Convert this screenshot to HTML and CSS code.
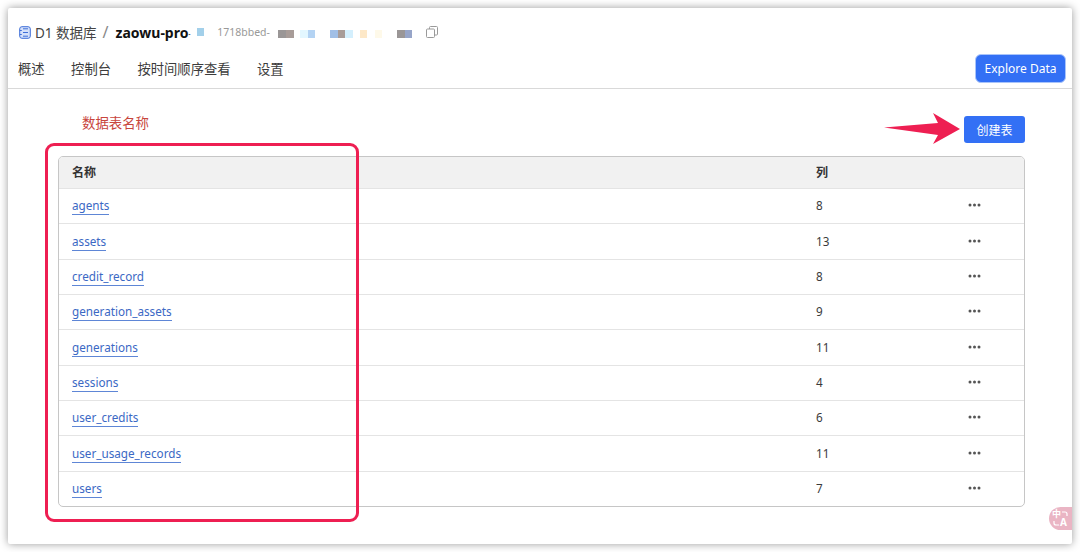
FILE: index.html
```html
<!DOCTYPE html>
<html lang="zh">
<head>
<meta charset="utf-8">
<title>D1 数据库</title>
<link rel="stylesheet" href="styles.css">
</head>
<body>
<svg class="defs" width="0" height="0"><defs><g id="more"><circle cx="2" cy="2" r="1.500"/><circle cx="6.500" cy="2" r="1.500"/><circle cx="11" cy="2" r="1.500"/></g></defs></svg>
<div class="card">
  <header class="header">
    <div class="crumbs">
      <svg class="db-icon" width="12" height="13" viewBox="0 0 12 13" fill="#d5e1fa" stroke="#3f6fd8" stroke-width="1"><rect x=".7" y=".7" width="10.600" height="11.600" rx="2.200"/><path d="M.8 4.500h2M.8 8.500h2M4 2.800h5M4 6.500h5M4 10.200h5" fill="none"/></svg>
      <span class="crumb">D1 数据库</span>
      <span class="slash">/</span>
      <span class="db-name">zaowu-pro<span class="dash">-</span></span>
      <i class="blot b-sky first"></i>
      <span class="db-id">1718bbed-</span>
      <span class="blots blots-a"><i class="blot b-grey"></i><i class="blot b-taupe"></i></span>
      <span class="blots blots-b"><i class="blot b-ice"></i><i class="blot b-blue"></i></span>
      <span class="blots blots-c"><i class="blot b-mid"></i><i class="blot b-taupe"></i><i class="blot b-ice2"></i></span>
      <span class="blots blots-d"><i class="blot b-peach"></i></span>
      <span class="blots blots-e"><i class="blot b-cream"></i></span>
      <span class="blots blots-f"><i class="blot b-grey"></i><i class="blot b-slate"></i></span>
      <svg class="copy" width="12" height="12" viewBox="0 0 12 12" fill="none" stroke="#9a9a9a" stroke-width="1"><rect x=".5" y="3" width="8" height="8.500" rx="1"/><path d="M3.500 3V1.500a1 1 0 0 1 1-1h6a1 1 0 0 1 1 1V8a1 1 0 0 1-1 1H8.500"/></svg>
    </div>
    <div class="tabs-row">
      <nav class="tabs">
        <a class="tab">概述</a>
        <a class="tab">控制台</a>
        <a class="tab">按时间顺序查看</a>
        <a class="tab">设置</a>
      </nav>
      <button class="btn btn-explore">Explore Data</button>
    </div>
  </header>
  <main class="main">
    <div class="toolbar"><button class="btn btn-create">创建表</button></div>
    <div class="table">
      <div class="row head"><span class="c-name">名称</span><span class="c-cols">列</span><span class="c-more"></span></div>
      <div class="row"><span class="c-name"><a class="link">agents</a></span><span class="c-cols">8</span><svg class="c-more" width="13" height="4" viewBox="0 0 13 4"><use href="#more"/></svg></div>
      <div class="row"><span class="c-name"><a class="link">assets</a></span><span class="c-cols">13</span><svg class="c-more" width="13" height="4" viewBox="0 0 13 4"><use href="#more"/></svg></div>
      <div class="row"><span class="c-name"><a class="link">credit_record</a></span><span class="c-cols">8</span><svg class="c-more" width="13" height="4" viewBox="0 0 13 4"><use href="#more"/></svg></div>
      <div class="row"><span class="c-name"><a class="link">generation_assets</a></span><span class="c-cols">9</span><svg class="c-more" width="13" height="4" viewBox="0 0 13 4"><use href="#more"/></svg></div>
      <div class="row"><span class="c-name"><a class="link">generations</a></span><span class="c-cols">11</span><svg class="c-more" width="13" height="4" viewBox="0 0 13 4"><use href="#more"/></svg></div>
      <div class="row"><span class="c-name"><a class="link">sessions</a></span><span class="c-cols">4</span><svg class="c-more" width="13" height="4" viewBox="0 0 13 4"><use href="#more"/></svg></div>
      <div class="row"><span class="c-name"><a class="link">user_credits</a></span><span class="c-cols">6</span><svg class="c-more" width="13" height="4" viewBox="0 0 13 4"><use href="#more"/></svg></div>
      <div class="row"><span class="c-name"><a class="link">user_usage_records</a></span><span class="c-cols">11</span><svg class="c-more" width="13" height="4" viewBox="0 0 13 4"><use href="#more"/></svg></div>
      <div class="row"><span class="c-name"><a class="link">users</a></span><span class="c-cols">7</span><svg class="c-more" width="13" height="4" viewBox="0 0 13 4"><use href="#more"/></svg></div>
    </div>
  </main>
  <div class="note">数据表名称</div>
  <div class="highlight"></div>
  <svg class="arrow" width="82" height="36" viewBox="0 0 82 36"><path d="M0 15.500 54 11 49 1 76 17 49 32 54 23Z" fill="#ee1f52"/></svg>
  <div class="translate">
    <span class="zh">中</span><span class="en">A</span>
    <svg class="corners" width="23" height="23" viewBox="0 0 23 23" fill="none" stroke="#fff" stroke-width="1.200"><path d="M13 5h3a2 2 0 0 1 2 2v2M5 14v2a2 2 0 0 0 2 2h3"/></svg>
  </div>
</div>
</body>
</html>
```

FILE: styles.css
```css
* { box-sizing: border-box; }
html, body { margin: 0; height: 100%; }
body {
  padding: 8px;
  background: #fff;
  overflow: hidden;
  font-family: "Noto Sans", "Noto Sans CJK SC", sans-serif;
  color: #36393a;
}
.defs { position: absolute; }
.card {
  position: relative;
  width: 1064px;
  height: 536px;
  background: #fff;
  box-shadow: 0 0 8px rgba(0,0,0,.4);
  border-radius: 2px;
}
.header {
  height: 81px;
  border-bottom: 1px solid #d9d9d9;
}
.crumbs {
  display: flex;
  align-items: center;
  height: 48px;
  padding: 0 0 0 11px;
  white-space: nowrap;
}
.db-icon { flex: none; }
.crumb { font-size: 13.500px; margin-left: 4px; color: #444; }
.slash { font-size: 16px; color: #888; margin-left: 6px; }
.db-name { font-size: 14px; font-weight: 700; color: #111; margin-left: 7px; width: 73px; }
.dash { font-size: 6px; vertical-align: 2px; }
.db-id { font-size: 10.500px; color: #999; margin-left: 13px; width: 52px; }
.blot { display: block; width: 7.700px; height: 8px; flex: none; filter: blur(.4px); }
.first { margin-left: 8px; }
.blots { display: flex; margin-top: 3px; }
.blots-a { margin-left: 9px; }
.blots-b { margin-left: 6.500px; }
.blots-c { margin-left: 14.500px; }
.blots-d { margin-left: 6.500px; }
.blots-e { margin-left: 7.500px; }
.blots-f { margin-left: 14.500px; }
.b-sky { background: #a3d0ea; }
.b-grey { background: #9a9696; }
.b-taupe { background: #a89c98; }
.b-ice { background: #e3f7ff; }
.b-blue { background: #b4d3f3; }
.b-mid { background: #a1bfe6; }
.b-ice2 { background: #d4effd; }
.b-peach { background: #fde8c8; }
.b-cream { background: #fef9e9; }
.b-slate { background: #97a5c8; }
.copy { margin-left: 14px; margin-top: -1px; flex: none; }
.tabs-row {
  display: flex;
  align-items: flex-start;
  justify-content: space-between;
  padding: 0 6px 0 10px;
  height: 32px;
}
.tabs { display: flex; align-items: center; gap: 26.500px; height: 24px; }
.tab { font-size: 13.300px; color: #3c3c3c; }
.btn {
  border: 0;
  color: #fff;
  background: #3370f5;
  font-family: inherit;
  padding: 0;
}
.btn-explore {
  width: 91px;
  height: 29px;
  margin-top: -2px;
  font-size: 12px;
  border-radius: 6px;
  border: 1px solid #a9c4fa;
}
.main { padding: 27px 47px 0 50px; }
.toolbar { display: flex; justify-content: flex-end; height: 40px; }
.btn-create { width: 61px; height: 27px; font-size: 12px; border-radius: 3px; }
.table {
  border: 1px solid #c6c6c6;
  border-radius: 5px;
  overflow: hidden;
}
.row {
  display: flex;
  align-items: center;
  height: 35.350px;
  padding: 0 0 2px 13px;
  font-size: 11.700px;
  border-top: 1px solid #e4e4e4;
  color: #3a3a3a;
}
.row.head {
  height: 31px;
  padding-bottom: 1px;
  border-top: 0;
  background: #f1f1f1;
  font-size: 12px;
  font-weight: 700;
  color: #333;
}
.c-name { width: 744px; }
.c-cols { width: 152px; }
.c-more { fill: #555; flex: none; }
.link {
  color: #3b68c4;
  border-bottom: 1px solid #5e86d6;
  padding-bottom: 1px;
}
.note {
  position: absolute;
  left: 74px;
  top: 104px;
  font-size: 13.400px;
  color: #c8453c;
}
.highlight {
  position: absolute;
  left: 37px;
  top: 135px;
  width: 314px;
  height: 379px;
  border: 3px solid #ee1f52;
  border-radius: 9px;
}
.arrow { position: absolute; left: 876px; top: 104px; }
.translate {
  position: absolute;
  left: 1041px;
  top: 499px;
  width: 23px;
  height: 23px;
  border-radius: 12px 0 0 12px;
  background: #eab5c4;
  color: #fff;
  box-shadow: 0 0 0 5px rgba(255,255,255,.85);
  clip-path: inset(-6px 0 -6px -6px round 17px 0 0 17px);
}
.translate .zh {
  position: absolute;
  left: 3px;
  top: 1px;
  font-size: 9px;
  font-weight: 700;
  line-height: 12px;
}
.translate .en {
  position: absolute;
  left: 11px;
  top: 9px;
  font-size: 10px;
  font-weight: 700;
  line-height: 12px;
}
.corners { position: absolute; left: 0; top: 0; }
```
